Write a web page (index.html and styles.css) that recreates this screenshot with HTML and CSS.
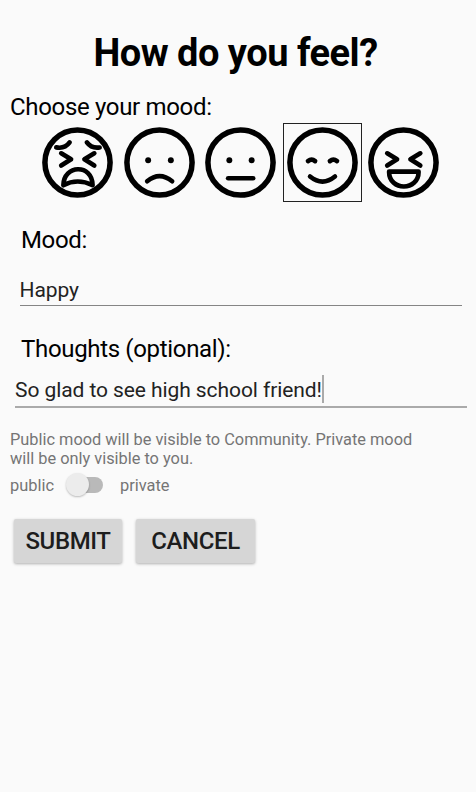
FILE: index.html
```html
<!DOCTYPE html>
<html lang="en">
<head>
<meta charset="utf-8">
<title>How do you feel?</title>
<link rel="stylesheet" href="styles.css">
</head>
<body>
<main class="screen">
  <h1 class="title"><span>How do you feel?</span></h1>
  <p class="label choose"><span>Choose your mood:</span></p>
  <div class="moods">
    <svg class="mood" viewBox="-40 -40 80 80"><circle class="face" r="33"/><path d="M-21.5-15.3Q-13-13.5-8-20.3M22.4-15.2Q14-14 9.5-20.3M-16.5-9.3L-6.5-3.3L-16.5 3M17-9.3L7-3.3L17 3M-14.3 23C-14 2 15 1 15.3 23Q0 15.5-14.3 23Z"/></svg>
    <svg class="mood" viewBox="-40 -40 80 80"><circle class="face" r="33"/><circle class="dot" cx="-11.5" cy="-2.3" r="3"/><circle class="dot" cx="11.5" cy="-2.3" r="3"/><path d="M-12.5 19Q0 8.5 12.8 19"/></svg>
    <svg class="mood" viewBox="-40 -40 80 80"><circle class="face" r="33"/><circle class="dot" cx="-11.3" cy="-2.3" r="3"/><circle class="dot" cx="11.3" cy="-2.3" r="3"/><path d="M-12.5 16H12.8"/></svg>
    <svg class="mood selected" viewBox="-40 -40 80 80"><circle class="face" r="33"/><path d="M-14.7-1.4Q-11-4.4-7.5-1.4M7.5-1.4Q11-4.4 14.7-1.4M-12.6 14.2Q0 24.4 12.6 14.2"/></svg>
    <svg class="mood" viewBox="-40 -40 80 80"><circle class="face" r="33"/><path d="M-16.5-9.3L-6.5-3.3L-16.5 3M17-9.3L7-3.3L17 3M-14.6 9.3H15.3C15.3 29.3-14.6 29.3-14.6 9.3Z"/></svg>
  </div>
  <p class="label mood-label"><span>Mood:</span></p>
  <div class="field field-mood"><span>Happy</span></div>
  <p class="label thoughts-label"><span>Thoughts (optional):</span></p>
  <div class="field field-thoughts"><span>So glad to see high school friend!</span><i class="caret"></i></div>
  <p class="note"><span>Public mood will be visible to Community. Private mood</span><br><span>will be only visible to you.</span></p>
  <div class="privacy"><span>public</span><div class="switch"><div class="thumb"></div></div><span>private</span></div>
  <div class="actions"><button class="submit"><span>SUBMIT</span></button><button class="cancel"><span>CANCEL</span></button></div>
</main>
</body>
</html>
```
FILE: styles.css
```css
* { box-sizing: border-box; }
body {
  margin: 0;
  background: #fafafa;
  color: #000;
  font-family: Roboto, "Liberation Sans", sans-serif;
}
.screen {
  height: 792px;
  padding-top: 31px;
  overflow: hidden;
}
.title {
  margin: 0;
  padding-right: 5px;
  text-align: center;
  font-size: 38px;
  line-height: 44px;
  font-weight: 700;
  letter-spacing: -.5px;
}
.label {
  margin: 0;
  font-size: 24px;
  line-height: 28px;
  letter-spacing: -.33px;
}
.choose { padding: 18px 0 0 10px; height: 46px; }
.moods {
  display: flex;
  gap: 2.5px;
  margin: 2px 0 0 38px;
}
.mood {
  width: 79px;
  height: 79px;
  flex: none;
  fill: none;
  stroke: #000;
  stroke-width: 4.7;
  stroke-linecap: round;
  stroke-linejoin: round;
  overflow: visible;
}
.face { stroke-width: 5.6; }
.dot { fill: #000; stroke: none; }
.selected { outline: 1px solid #222; outline-offset: -1px; }
.mood-label { margin: 24px 0 0 21px; }
.field {
  display: flex;
  align-items: center;
  color: #222;
  font-size: 21px;
}
.field-mood {
  height: 31px;
  margin: 21px 14px 0 19.5px;
  border-bottom: 1px solid #858585;
  letter-spacing: -.1px;
}
.thoughts-label { margin: 29px 0 0 21px; }
.field-thoughts {
  height: 34px;
  margin: 11px 9px 0 15px;
  padding-bottom: 1px;
  border-bottom: 2px solid #aaa;
  letter-spacing: -.08px;
}
.caret { width: 2px; height: 28px; margin-top: -2px; background: #aaa; }
.note {
  margin: 22px 0 0 10px;
  font-size: 16.35px;
  line-height: 19px;
  color: #757575;
}
.privacy {
  display: flex;
  align-items: center;
  height: 28px;
  margin: 3px 0 0 10px;
  font-size: 16.4px;
  color: #757575;
}
.switch {
  width: 33px;
  height: 16px;
  margin: 0 17px 0 16px;
  border-radius: 8px;
  background: #b9b9b9;
}
.thumb {
  width: 23px;
  height: 23px;
  margin: -4px 0 0 -4px;
  border-radius: 50%;
  background: #ececec;
  box-shadow: 0 1px 2px rgba(0, 0, 0, .25);
}
.actions {
  display: flex;
  gap: 14px;
  margin: 20px 0 0 14px;
}
button {
  height: 43.5px;
  padding: 0;
  border: 0;
  border-radius: 2px;
  background: #d6d6d6;
  color: #1d1d1d;
  font: 500 24px/44px Roboto, "Liberation Sans", sans-serif;
  letter-spacing: -.4px;
  box-shadow: 0 1px 3px rgba(0, 0, 0, .3);
}
.submit { width: 108px; }
.cancel { width: 119px; }
```
